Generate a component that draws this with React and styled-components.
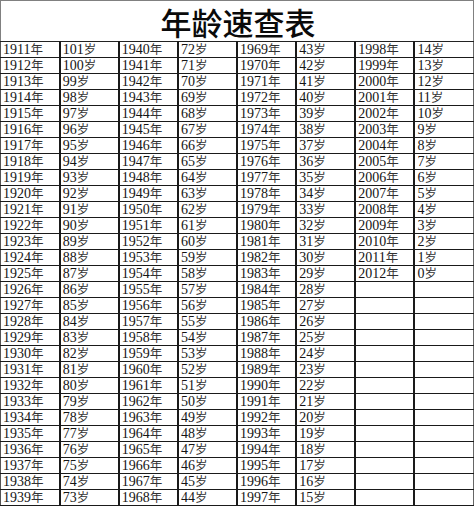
import styled, { createGlobalStyle } from "styled-components";

const GlobalStyle = createGlobalStyle`
  html, body {
    margin: 0;
    padding: 0;
    background: #fff;
  }
`;

const Sheet = styled.table`
  width: 474px;
  table-layout: fixed;
  border-collapse: collapse;
  font-family: "Liberation Serif", "Noto Sans CJK SC", serif;
  color: #151515;
`;

const TitleCell = styled.th`
  height: 38px;
  padding: 2px 0 0 2px;
  border: 1px solid #808080;
  border-bottom: 1px solid #222;
  font-family: "Noto Sans CJK SC", sans-serif;
  font-size: 31px;
  font-weight: 500;
  line-height: 34px;
  text-align: center;
  vertical-align: middle;
  color: #0a0a0a;
`;

const Row = styled.tr`
  height: 16px;
`;

const Cell = styled.td`
  height: 14px;
  padding: 0 0 0 2px;
  border-top: 1px solid #1a1a1a;
  border-bottom: 1px solid #1a1a1a;
  border-left: ${(p) => (p.$first ? "1px solid #555" : "2px solid #1a1a1a")};
  border-right: ${(p) => (p.$last ? "1px solid #666" : "2px solid #1a1a1a")};
  vertical-align: top;
`;

const Value = styled.div`
  display: flex;
  align-items: baseline;
  height: 14px;
  font-size: 14px;
  line-height: 14px;
  white-space: nowrap;
`;

const Unit = styled.span`
  font-family: "Noto Sans CJK SC", sans-serif;
  font-size: 12.5px;
  line-height: 14px;
  color: #333;
`;

const ROWS = 29;
const COLS = 4;

function entry(col, row) {
  const year = 1911 + col * ROWS + row;
  if (year > 2012) return null;
  return { year, age: 2012 - year };
}

export default function App() {
  const rows = Array.from({ length: ROWS }, (_, r) => r);
  const cols = Array.from({ length: COLS }, (_, c) => c);

  return (
    <>
      <GlobalStyle />
      <Sheet>
        <thead>
          <tr>
            <TitleCell colSpan={8}>年龄速查表</TitleCell>
          </tr>
        </thead>
        <tbody>
          {rows.map((r) => (
            <Row key={r}>
              {cols.map((c) => {
                const e = entry(c, r);
                return [
                  <Cell key={`y${c}`} $first={c === 0}>
                    {e && (
                      <Value>
                        {e.year}
                        <Unit>年</Unit>
                      </Value>
                    )}
                  </Cell>,
                  <Cell key={`a${c}`} $last={c === COLS - 1}>
                    {e && (
                      <Value>
                        {e.age}
                        <Unit>岁</Unit>
                      </Value>
                    )}
                  </Cell>,
                ];
              })}
            </Row>
          ))}
        </tbody>
      </Sheet>
    </>
  );
}
